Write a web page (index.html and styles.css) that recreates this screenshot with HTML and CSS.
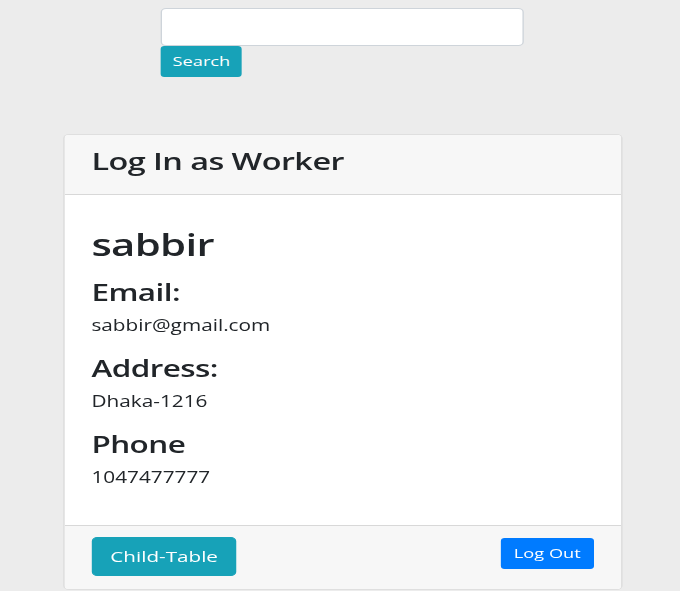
FILE: index.html
```html
<!DOCTYPE html>
<html lang="en">
<head>
<meta charset="utf-8">
<title>Worker</title>
<link rel="stylesheet" href="styles.css">
</head>
<body>
<div class="page">
  <form class="search">
    <input class="search-input" type="text" aria-label="Search">
    <button class="btn btn-info btn-sm btn-search" type="button">Search</button>
  </form>

  <div class="card">
    <div class="card-header">
      <h4 class="card-title">Log In as Worker</h4>
    </div>
    <div class="card-body">
      <h2 class="name">sabbir</h2>
      <h4 class="label">Email:</h4>
      <p class="value">sabbir@gmail.com</p>
      <h4 class="label">Address:</h4>
      <p class="value">Dhaka-1216</p>
      <h4 class="label">Phone</h4>
      <p class="value">1047477777</p>
    </div>
    <div class="card-footer">
      <button class="btn btn-info btn-md" type="button">Child-Table</button>
      <button class="btn btn-primary btn-sm btn-logout" type="button">Log Out</button>
    </div>
  </div>
</div>
</body>
</html>
```

FILE: styles.css
```css
html, body {
  margin: 0;
  padding: 0;
  overflow: hidden;
}

body {
  background: #ececec;
  font-family: "Open Sans", "Noto Sans", "Liberation Sans", sans-serif;
  color: #212529;
}

.page {
  width: 503.7px;
  padding-top: 8px;
  transform: scaleX(1.35);
  transform-origin: 0 0;
}

.search {
  display: flex;
  flex-direction: column;
  align-items: flex-start;
  margin: 0 0 0 119.3px;
  width: 269px;
}

.search-input {
  box-sizing: border-box;
  width: 269px;
  height: 38px;
  margin: 0;
  border: 1px solid #ced4da;
  border-radius: 4px;
  background: #fff;
  padding: 6px 12px;
  font: inherit;
}

.btn {
  box-sizing: border-box;
  border: 1px solid transparent;
  border-radius: 4px;
  color: #fff;
  font-family: inherit;
  font-weight: 400;
  margin: 0;
  cursor: pointer;
}

.btn-info {
  background: #17a2b8;
  border-color: #17a2b8;
}

.btn-primary {
  background: #007bff;
  border-color: #007bff;
}

.btn-sm {
  height: 31px;
  line-height: 29px;
  font-size: 13.5px;
  padding: 0 8.6px;
  border-radius: 3px;
}

.btn-search {
  font-size: 13.5px;
  padding: 0 7.5px;
}

.btn-md {
  height: 39px;
  line-height: 37px;
  font-size: 15.3px;
  padding: 0 13px;
}

.card {
  box-sizing: border-box;
  margin: 57px 0 0 46.7px;
  width: 414.1px;
  background: #fff;
  border: 1px solid rgba(0, 0, 0, 0.125);
  border-radius: 4px;
  overflow: hidden;
}

.card-header {
  background: #f7f7f7;
  border-bottom: 1px solid rgba(0, 0, 0, 0.125);
  padding: 12px 20px 19px;
}

.card-title {
  margin: 0;
  font-size: 24px;
  line-height: 28px;
  font-weight: 600;
  letter-spacing: -0.4px;
}

.card-body {
  padding: 31px 20px 18.5px;
}

.name {
  margin: 0 0 15px;
  font-size: 31px;
  line-height: 37px;
  font-weight: 600;
  letter-spacing: -0.5px;
}

.label {
  margin: 0 0 8px;
  font-size: 23.3px;
  line-height: 28px;
  font-weight: 600;
  letter-spacing: -0.4px;
}

.value {
  margin: 0 0 16px;
  font-size: 15.4px;
  line-height: 24px;
}

.card-footer {
  display: flex;
  justify-content: space-between;
  align-items: flex-start;
  background: #f7f7f7;
  border-top: 1px solid rgba(0, 0, 0, 0.125);
  padding: 11px 20px 13px;
}

.btn-logout {
  margin-top: 1px;
}
```
